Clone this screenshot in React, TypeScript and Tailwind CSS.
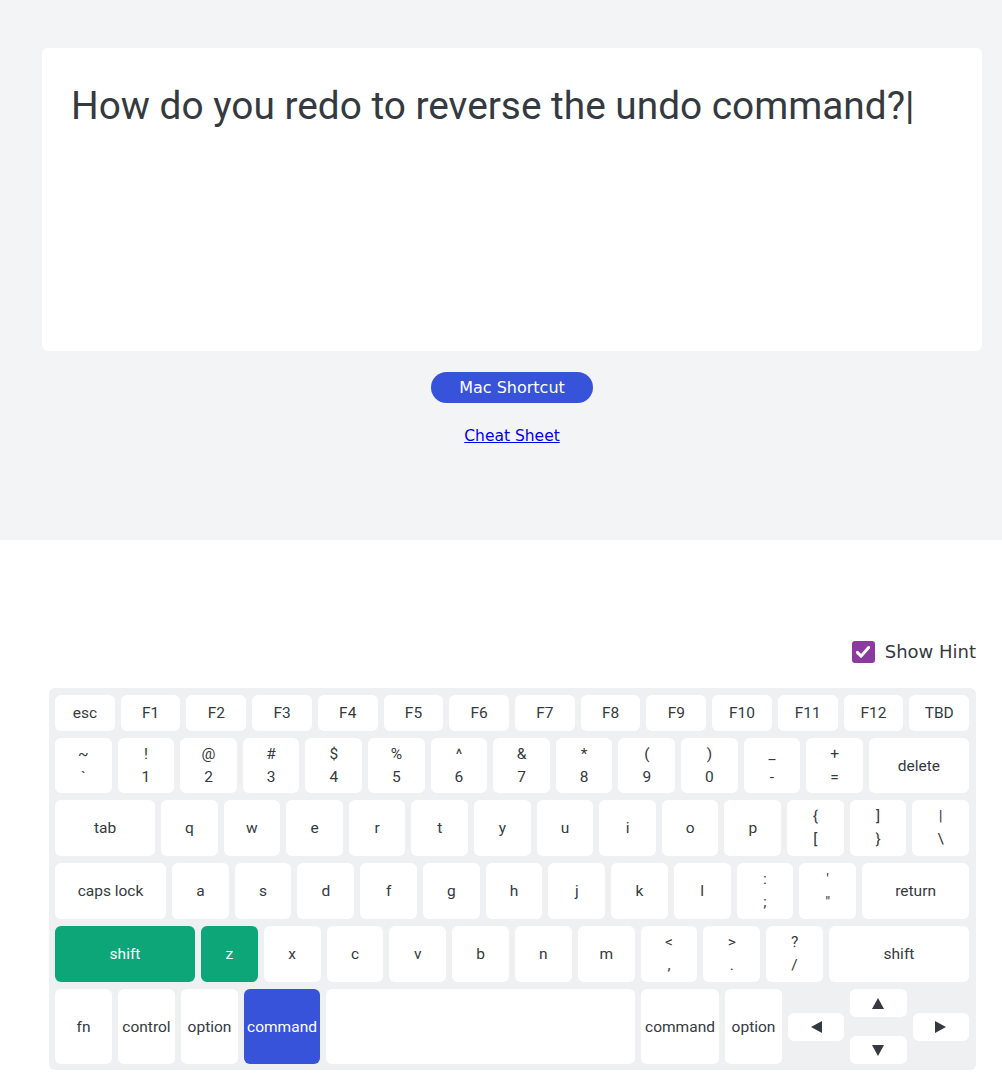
import React from "react";

type K = { t?: string; b?: string; l?: string; w?: string; hl?: "green" | "blue" };

const ROBOTO = { fontFamily: "Roboto, 'Liberation Sans', sans-serif" };
const VERD = { fontFamily: "'DejaVu Sans', Verdana, sans-serif" };

function Key({ k, h }: { k: K; h: string }) {
  const base =
    k.hl === "green"
      ? "bg-[#0ca678] text-white"
      : k.hl === "blue"
      ? "bg-[#3653d9] text-white"
      : "bg-white text-[#343a40]";
  return (
    <div
      className={`${base} ${k.w ?? "flex-1"} ${h} rounded-[6px] flex flex-col items-center justify-center text-[15.5px] min-w-0 whitespace-nowrap`}
    >
      {k.l !== undefined ? (
        <span className="leading-[20px]">{k.l}</span>
      ) : (
        <>
          <span className="leading-[23px]">{k.t}</span>
          <span className="leading-[23px]">{k.b}</span>
        </>
      )}
    </div>
  );
}

function Row({ keys, h }: { keys: K[]; h: string }) {
  return (
    <div className="flex gap-[6px]">
      {keys.map((k, i) => (
        <Key key={i} k={k} h={h} />
      ))}
    </div>
  );
}

const fnRow: K[] = ["esc", "F1", "F2", "F3", "F4", "F5", "F6", "F7", "F8", "F9", "F10", "F11", "F12", "TBD"].map(
  (l) => ({ l })
);

const numRow: K[] = [
  { t: "~", b: "`" },
  { t: "!", b: "1" },
  { t: "@", b: "2" },
  { t: "#", b: "3" },
  { t: "$", b: "4" },
  { t: "%", b: "5" },
  { t: "^", b: "6" },
  { t: "&", b: "7" },
  { t: "*", b: "8" },
  { t: "(", b: "9" },
  { t: ")", b: "0" },
  { t: "_", b: "-" },
  { t: "+", b: "=" },
  { l: "delete", w: "w-[100px]" },
];

const qRow: K[] = [
  { l: "tab", w: "w-[100px]" },
  ...["q", "w", "e", "r", "t", "y", "u", "i", "o", "p"].map((l) => ({ l })),
  { t: "{", b: "[" },
  { t: "]", b: "}" },
  { t: "|", b: "\\" },
];

const aRow: K[] = [
  { l: "caps lock", w: "w-[111px]" },
  ...["a", "s", "d", "f", "g", "h", "j", "k", "l"].map((l) => ({ l })),
  { t: ":", b: ";" },
  { t: "'", b: "\"" },
  { l: "return", w: "w-[107px]" },
];

const zRow: K[] = [
  { l: "shift", w: "w-[140px]", hl: "green" },
  { l: "z", hl: "green" },
  ...["x", "c", "v", "b", "n", "m"].map((l) => ({ l })),
  { t: "<", b: "," },
  { t: ">", b: "." },
  { t: "?", b: "/" },
  { l: "shift", w: "w-[140px]" },
];

const TRI: Record<string, string> = {
  up: "M6 0L12 11H0Z",
  down: "M0 0H12L6 11Z",
  left: "M11 0V12L0 6Z",
  right: "M0 0L11 6L0 12Z",
};

function Arrow({ d }: { d: "up" | "down" | "left" | "right" }) {
  const vertical = d === "up" || d === "down";
  return (
    <div className="h-[28px] w-full bg-white rounded-[6px] flex items-center justify-center">
      <svg
        viewBox={vertical ? "0 0 12 11" : "0 0 11 12"}
        className={vertical ? "w-[12px] h-[11px]" : "w-[11px] h-[12px]"}
      >
        <path d={TRI[d]} fill="#343a40" />
      </svg>
    </div>
  );
}

export default function App() {
  return (
    <div className="min-h-screen bg-white" style={ROBOTO}>
      <div className="bg-[#f3f4f6] h-[540px] pt-[48px]">
        <div className="ml-[42px] w-[940px] flex flex-col items-center">
          <div className="w-full h-[303px] bg-white rounded-[6px] pl-[29px] pt-[33px]">
            <p className="text-[38.8px] leading-[50px] text-[#343a40] whitespace-nowrap">
              How do you redo to reverse the undo command?|
            </p>
          </div>
          <button
            className="mt-[21px] h-[31px] px-[28px] rounded-full bg-[#3653d9] text-white text-[16px]"
            style={VERD}
          >
            Mac Shortcut
          </button>
          <a
            href="#"
            className="mt-[24px] text-[15.5px] leading-[19px] text-[#0000ee] underline"
            style={VERD}
          >
            Cheat Sheet
          </a>
        </div>
      </div>

      <div className="ml-[49px] w-[927px]">
        <div className="mt-[100px] flex items-center justify-end gap-[10px] h-[23px]">
          <div className="w-[23px] h-[22px] rounded-[3px] bg-[#8b3aa0] flex items-center justify-center">
            <svg viewBox="0 0 24 24" className="w-[18px] h-[18px]" fill="none" stroke="white" strokeWidth="4" strokeLinecap="round" strokeLinejoin="round">
              <path d="M4.5 12.5l5 5L19.5 6" />
            </svg>
          </div>
          <span className="text-[18px] text-[#343a40]" style={VERD}>
            Show Hint
          </span>
        </div>

        <div className="mt-[25px] bg-[#eef0f2] rounded-[6px] pl-[6px] pr-[7px] pt-[7px] pb-[6px] flex flex-col gap-[7px]">
          <Row keys={fnRow} h="h-[36px]" />
          <Row keys={numRow} h="h-[55px]" />
          <Row keys={qRow} h="h-[56px]" />
          <Row keys={aRow} h="h-[56px]" />
          <Row keys={zRow} h="h-[56px]" />
          <div className="flex gap-[6px] h-[75px]">
            <Key k={{ l: "fn", w: "w-[57px]" }} h="h-[75px]" />
            <Key k={{ l: "control", w: "w-[57px]" }} h="h-[75px]" />
            <Key k={{ l: "option", w: "w-[57px]" }} h="h-[75px]" />
            <Key k={{ l: "command", w: "w-[76px]", hl: "blue" }} h="h-[75px]" />
            <Key k={{ l: "" }} h="h-[75px]" />
            <Key k={{ l: "command", w: "w-[78px]" }} h="h-[75px]" />
            <Key k={{ l: "option", w: "w-[57px]" }} h="h-[75px]" />
            <div className="w-[181px] flex gap-[6px]">
              <div className="flex-1 flex items-center">
                <Arrow d="left" />
              </div>
              <div className="flex-1 flex flex-col justify-between">
                <Arrow d="up" />
                <Arrow d="down" />
              </div>
              <div className="flex-1 flex items-center">
                <Arrow d="right" />
              </div>
            </div>
          </div>
        </div>
      </div>
    </div>
  );
}
